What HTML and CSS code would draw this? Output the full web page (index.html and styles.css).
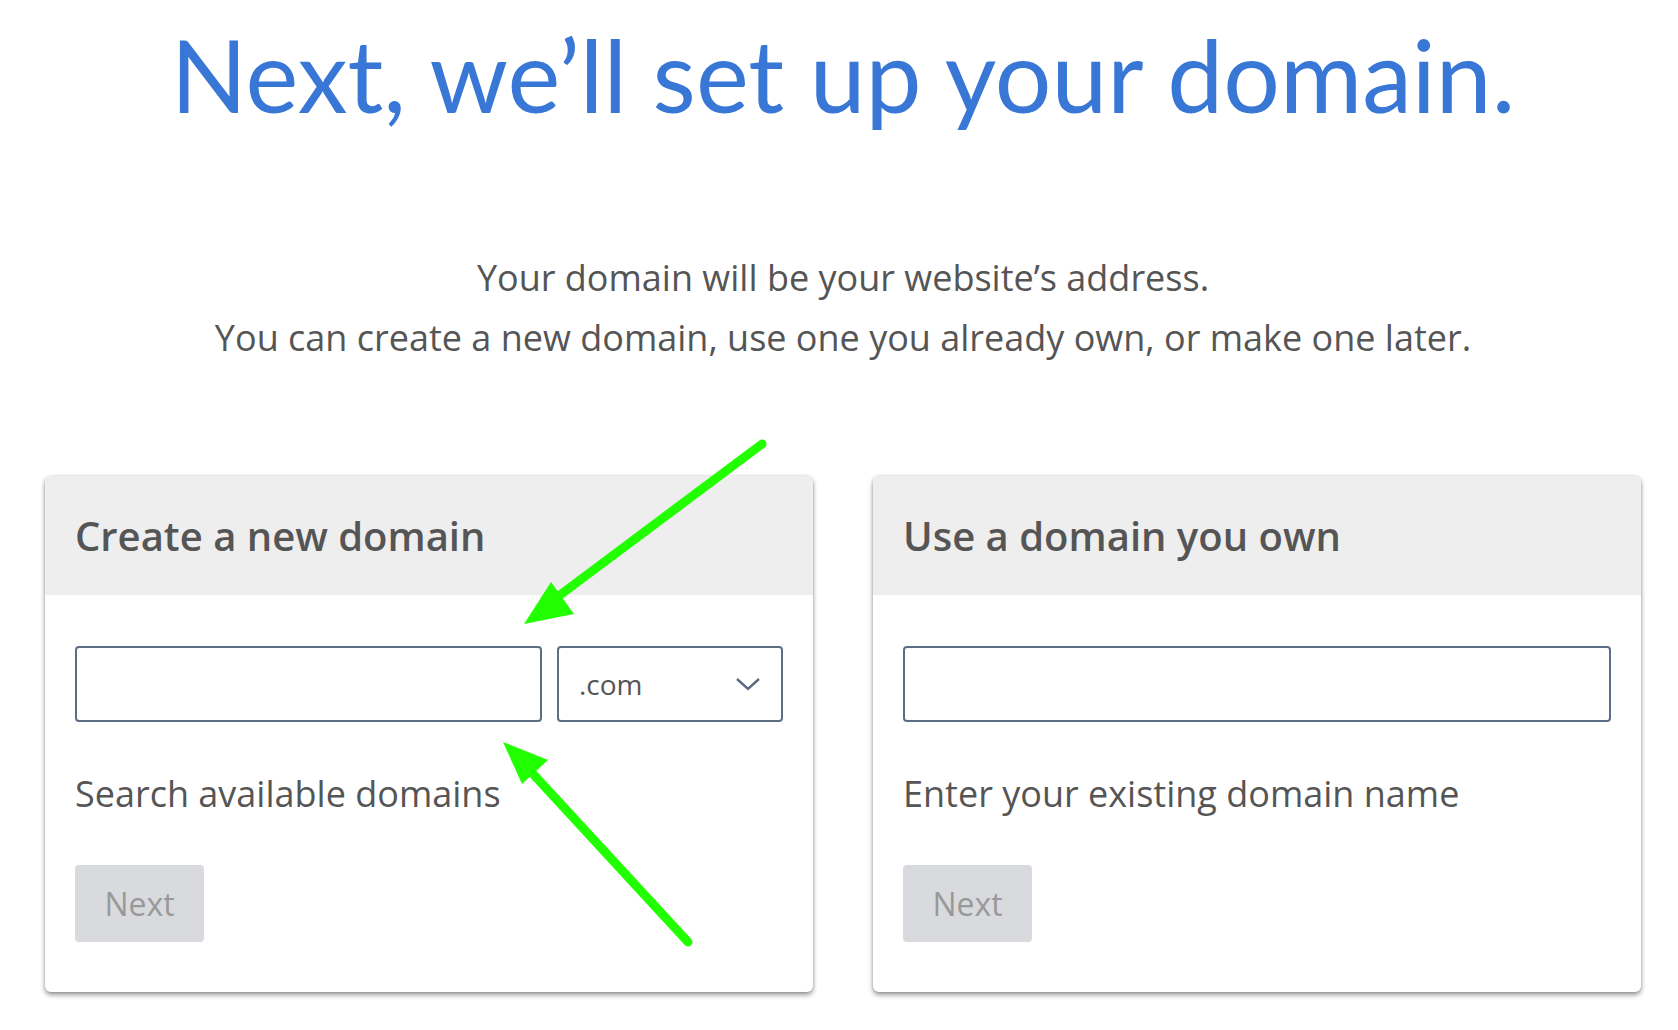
FILE: index.html
```html
<!DOCTYPE html>
<html lang="en">
<head>
    <meta charset="UTF-8">
    <title>Set up your domain</title>
    <link rel="stylesheet" href="styles.css">
</head>
<body>
    <div class="page">
        <h1 class="title">Next, we’ll set up your domain.</h1>
        <p class="intro">Your domain will be your website’s address.<br>You can create a new domain, use one you already own, or make one later.</p>

        <div class="cards">
            <div class="card">
                <div class="card-head">Create a new domain</div>
                <div class="card-body">
                    <div class="field-row">
                        <input class="field" type="text">
                        <div class="select">
                            <span>.com</span>
                            <svg width="26" height="16" viewBox="0 0 26 16" fill="none" stroke="#5a6a80" stroke-width="2.4"><path d="M2 3l11 10 11-10"/></svg>
                        </div>
                    </div>
                    <p class="hint">Search available domains</p>
                    <button class="next" disabled>Next</button>
                </div>
            </div>
            <div class="card">
                <div class="card-head">Use a domain you own</div>
                <div class="card-body">
                    <div class="field-row">
                        <input class="field" type="text">
                    </div>
                    <p class="hint">Enter your existing domain name</p>
                    <button class="next" disabled>Next</button>
                </div>
            </div>
        </div>
    </div>

    <!-- annotation arrows drawn over the screenshot -->
    <svg class="arrows" width="1678" height="1030" viewBox="0 0 1678 1030">
        <g stroke="#22ff00" stroke-width="9" stroke-linecap="round" fill="none">
            <path d="M762 444L548 604"/>
            <path d="M688 942L522 762"/>
        </g>
        <g fill="#22ff00">
            <path d="M524 624L551 582L574 614Z"/>
            <path d="M503 742L548 760L522 784Z"/>
        </g>
    </svg>
</body>
</html>
```

FILE: styles.css
```css
body {
    margin: 0;
    padding-bottom: 30px;
    background: #fff;
    font-family: "Open Sans", sans-serif;
    color: #555;
}
.page {
    width: 1596px;
    margin-left: 45px;
}
.title {
    margin: 14px 0 0;
    font-family: Lato, sans-serif;
    font-weight: 400;
    font-size: 100px;
    line-height: 120px;
    color: #3877d6;
    text-align: center;
}
.intro {
    margin: 114px 0 0;
    font-size: 36px;
    line-height: 60px;
    text-align: center;
}
.cards {
    display: flex;
    gap: 60px;
    margin-top: 108px;
}
.card {
    flex: 1;
    background: #fff;
    border-radius: 6px;
    box-shadow: 0 3px 5px rgba(0, 0, 0, 0.4), 0 0 3px rgba(0, 0, 0, 0.15);
    overflow: hidden;
}
.card-head {
    height: 119px;
    padding: 0 30px;
    display: flex;
    align-items: center;
    background: #eee;
    font-size: 40px;
    font-weight: 600;
}
.card-body {
    padding: 51px 30px 50px;
}
.field-row {
    display: flex;
    gap: 15px;
}
.field {
    flex: 1;
    height: 76px;
    box-sizing: border-box;
    border: 2px solid #5d6d85;
    border-radius: 4px;
    margin: 0;
}
.select {
    width: 226px;
    height: 76px;
    box-sizing: border-box;
    border: 2px solid #5d6d85;
    border-radius: 4px;
    display: flex;
    align-items: center;
    justify-content: space-between;
    padding: 0 20px 0 20px;
    font-size: 28px;
}
.hint {
    margin: 0;
    height: 143px;
    font-size: 36px;
    line-height: 143px;
}
.next {
    width: 129px;
    height: 77px;
    border: 0;
    border-radius: 4px;
    background: #d8dade;
    color: #999;
    font-family: "Open Sans", sans-serif;
    font-size: 32px;
    padding: 0;
}
.arrows {
    position: absolute;
    top: 0;
    left: 0;
    pointer-events: none;
}
```
